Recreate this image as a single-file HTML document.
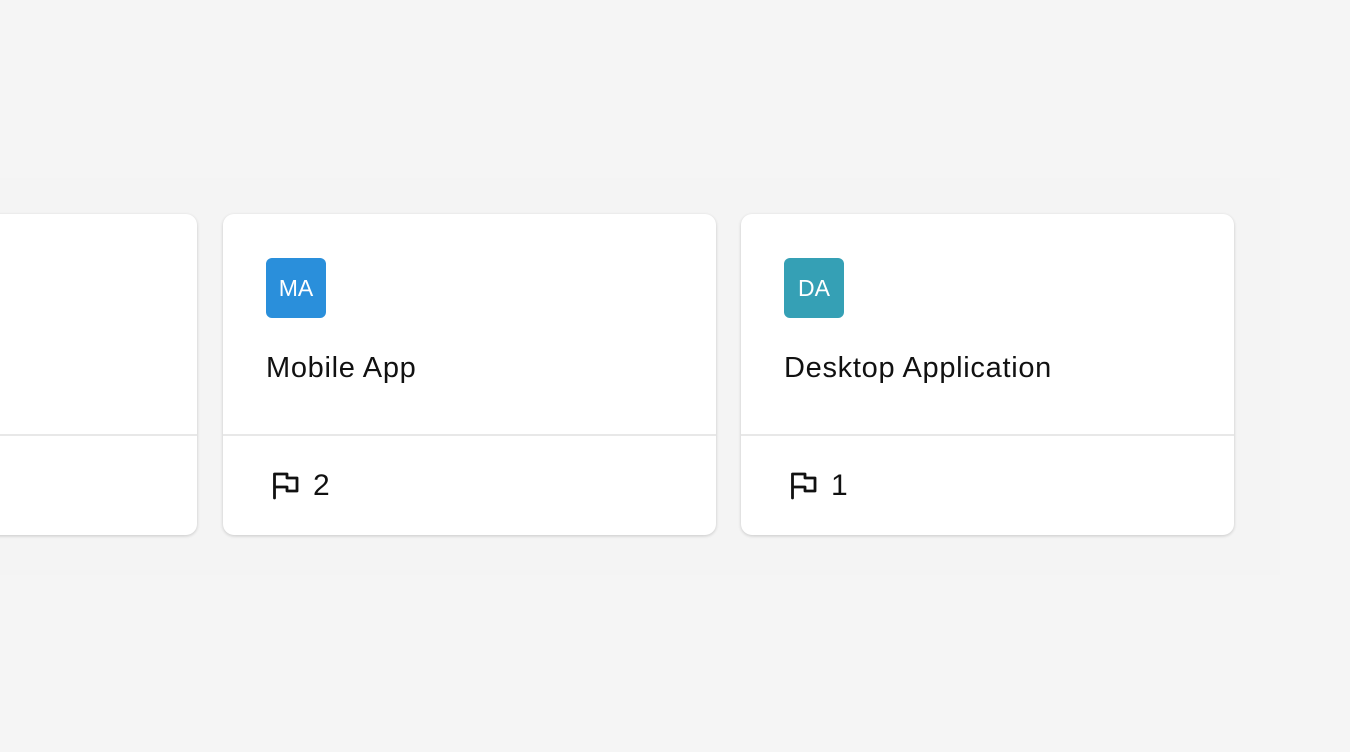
<!DOCTYPE html>
<html><head><style>
body{margin:0;width:1350px;height:752px;background:#f5f5f5;overflow:hidden;position:relative;font-family:"Liberation Sans",Arial,sans-serif}
.wrap{position:absolute;left:0;top:178px;width:1280px;height:397px;background:#f4f4f4}
.card{position:absolute;top:214px;width:493px;height:321px;background:#fff;border-radius:11px;box-shadow:0 1px 3px rgba(0,0,0,.18)}
.card .div{position:absolute;left:0;right:0;top:220px;height:2px;background:#e8e8e8}
.av{position:absolute;left:43px;top:44px;width:60px;height:60px;border-radius:6px;color:#fff;font-size:23px;line-height:60px;text-align:center}
.t{position:absolute;left:43px;top:138px;font-size:29px;letter-spacing:0.7px;color:#111}
.f{position:absolute;left:48px;top:257px}
.n{position:absolute;left:90px;top:255px;font-size:30px;color:#111}
</style></head><body>
<div class="wrap"></div>
<div class="card" style="left:-296px"><div class="div"></div></div>
<div class="card" style="left:223px"><div class="div"></div>
<div class="av" style="background:#2a8fdb">MA</div><div class="t">Mobile App</div>
<svg class="f" width="30" height="30" viewBox="0 0 30 30"><path d="M3.5 27V3H16V7H26V20H16V16H3.5" fill="none" stroke="#111" stroke-width="2.8" stroke-linejoin="round" stroke-linecap="round"/></svg>
<div class="n">2</div></div>
<div class="card" style="left:741px"><div class="div"></div>
<div class="av" style="background:#35a0b5">DA</div><div class="t">Desktop Application</div>
<svg class="f" width="30" height="30" viewBox="0 0 30 30"><path d="M3.5 27V3H16V7H26V20H16V16H3.5" fill="none" stroke="#111" stroke-width="2.8" stroke-linejoin="round" stroke-linecap="round"/></svg>
<div class="n">1</div></div>
</body></html>
